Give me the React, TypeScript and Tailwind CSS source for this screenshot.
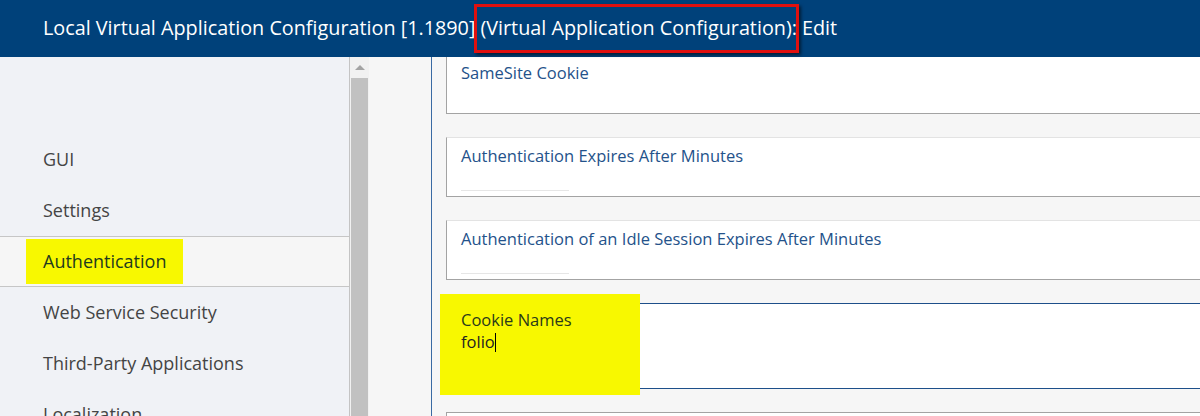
const navItems = [
  { label: 'GUI', active: false },
  { label: 'Settings', active: false },
  { label: 'Authentication', active: true },
  { label: 'Web Service Security', active: false },
  { label: 'Third-Party Applications', active: false },
  { label: 'Localization', active: false },
];

const Field = ({ label, line = false, first = false }: { label: string; line?: boolean; first?: boolean }) => (
  <div
    className={`shrink-0 bg-white border-l border-b border-[#a3a3a3] ${first ? 'h-[57px] pt-[5px]' : 'h-[60px] border-t border-t-[#e3e3e3] pt-[7px]'} pl-[14px]`}
  >
    <div className="text-[16.5px] leading-[22px] text-[#24528a]">{label}</div>
    {line && <div className="mt-[23px] w-[108px] h-px bg-[#e6e6e6]" />}
  </div>
);

export default function App() {
  return (
    <div className="w-[1200px] h-[416px] overflow-hidden bg-[#f6f6f6] font-['Open_Sans',sans-serif]">
      {/* Header */}
      <div className="h-[57px] bg-[#00417a] flex items-center pl-[43px] pb-[1px] text-white text-[19.8px] leading-none">
        <span>Local Virtual Application Configuration [1.1890]</span>
        <span className="relative ml-[5px]">
          (Virtual Application Configuration):
          <span className="absolute -left-[6px] -right-[2px] -top-[14px] -bottom-[15px] border-[3px] border-[#e0100f] shadow-[2px_2px_3px_rgba(0,0,0,0.55)]" />
        </span>
        <span className="ml-[5px]">Edit</span>
      </div>

      <div className="flex h-[359px]">
        {/* Left nav */}
        <div className="w-[350px] bg-[#f0f2f6] border-r border-[#c4c4c4] pt-[77px] text-[18px] text-[#444]">
          {navItems.map((item) => (
            <div
              key={item.label}
              className={`h-[51px] flex items-center ${item.active ? 'bg-[#f6f6f6] border-y border-[#c6c6c6]' : ''}`}
            >
              {item.active ? (
                <span className="ml-[26px] bg-[#f8f800] h-[45px] px-[17px] flex items-center text-[#1f3b1f]">
                  {item.label}
                </span>
              ) : (
                <span className="ml-[43px]">{item.label}</span>
              )}
            </div>
          ))}
        </div>

        {/* Scrollbar */}
        <div className="w-[19px] bg-[#f1f1f1] flex flex-col items-center">
          <div className="h-[21px] flex items-center justify-center">
            <div className="w-0 h-0 border-l-[5px] border-r-[5px] border-b-[5px] border-l-transparent border-r-transparent border-b-[#a3a3a3]" />
          </div>
          <div className="w-[17px] flex-1 bg-[#c1c1c1]" />
        </div>

        {/* Spacer + blue rule */}
        <div className="w-[63px] border-r border-[#3a6aa3]" />

        {/* Content */}
        <div className="flex-1 pl-[14px] flex flex-col gap-[23px]">
          <Field label="SameSite Cookie" first />
          <Field label="Authentication Expires After Minutes" line />
          <Field label="Authentication of an Idle Session Expires After Minutes" line />
          <div className="shrink-0 relative h-[86px] bg-white border border-r-0 border-[#1d4f8a] pl-[14px] pt-[5px]">
            <div className="absolute -left-[7px] -top-[10px] w-[200px] h-[101px] bg-[#f8f800]" />
            <div className="relative text-[16.5px] leading-[22px] text-[#2a3a1a]">Cookie Names</div>
            <div className="relative text-[16.5px] leading-[22px] text-[#222] flex items-center">
              <span>foli</span>
              <span className="relative">
                o
                <span className="absolute right-[-1px] top-[2px] w-px h-[19px] bg-black" />
              </span>
            </div>
          </div>
          <div className="shrink-0 h-[60px] bg-white border-l border-t border-[#a3a3a3]" />
        </div>
      </div>
    </div>
  );
}
